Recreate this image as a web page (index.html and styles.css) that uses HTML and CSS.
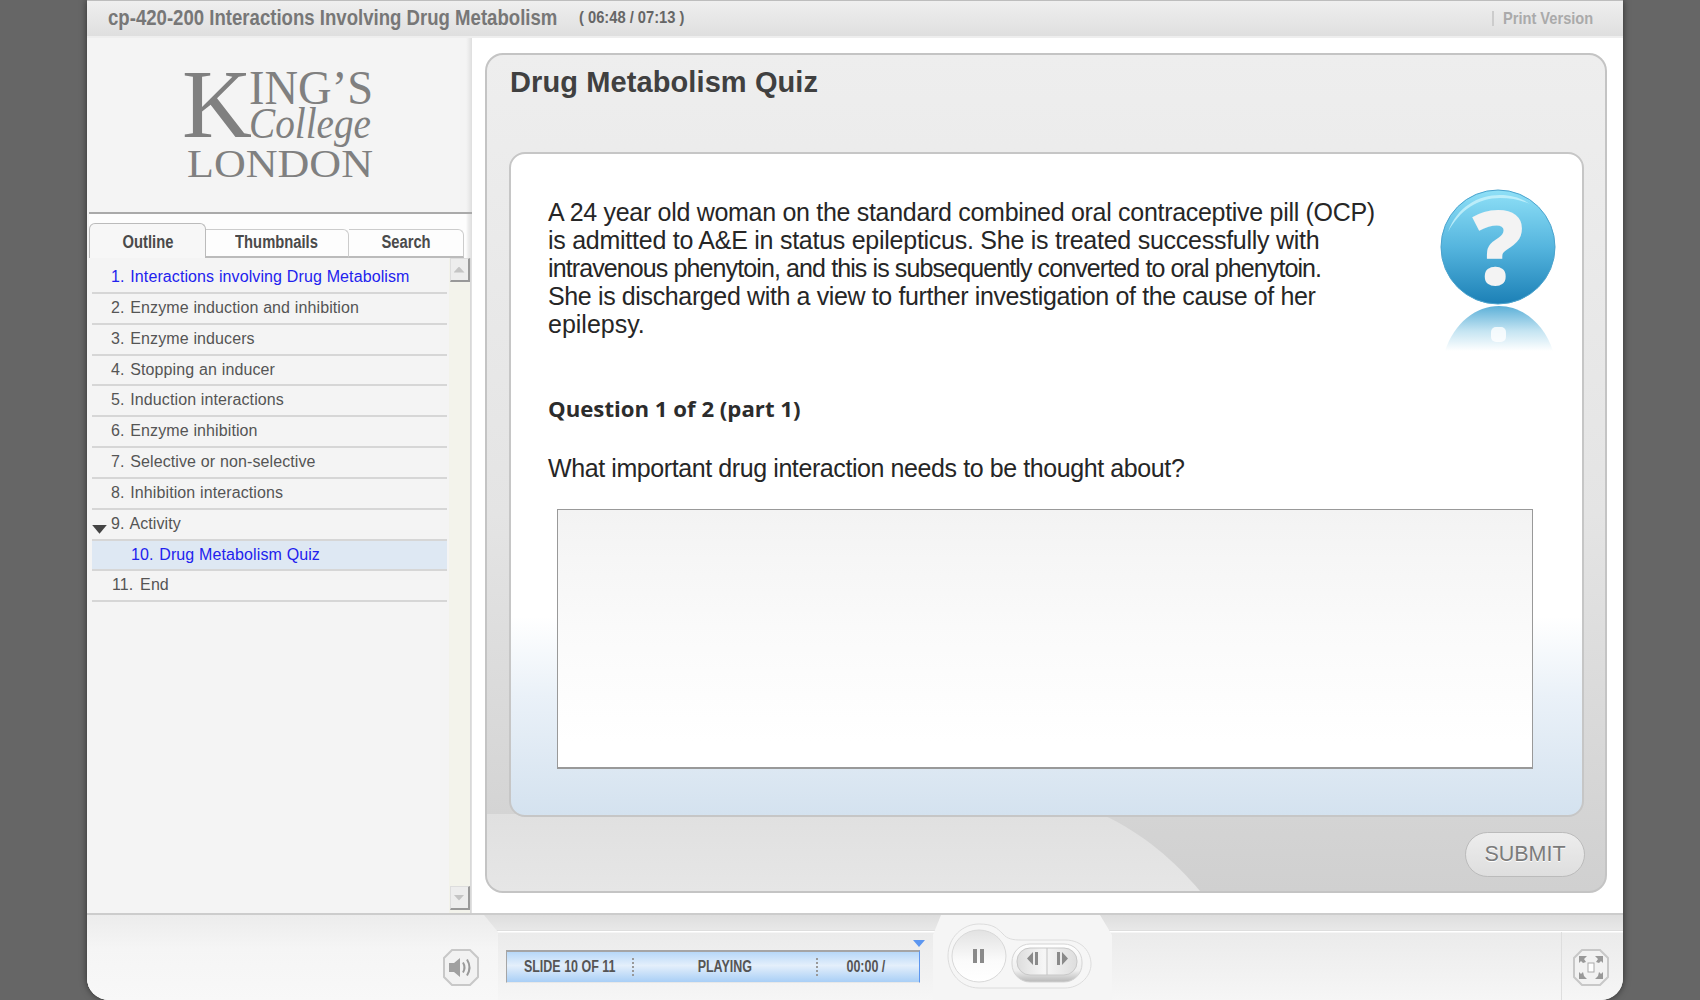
FILE: index.html
```html
<!DOCTYPE html>
<html lang="en">
<head>
<meta charset="utf-8">
<title>Drug Metabolism Quiz</title>
<link rel="stylesheet" href="styles.css">
</head>
<body>
<div class="player">
  <header class="topbar">
    <span class="course"><span class="narrow">cp-420-200 Interactions Involving Drug Metabolism</span></span>
    <span class="time"><span class="narrow">( 06:48 / 07:13 )</span></span>
    <span class="print"><span class="narrow">Print Version</span></span>
  </header>
  <div class="main">
    <aside class="sidebar">
      <div class="logo">
        <svg class="logo-svg" width="200" height="125" viewBox="0 0 200 125">
          <text class="lg-k" x="3" y="71" textLength="70" lengthAdjust="spacingAndGlyphs">K</text>
          <text class="lg-ing" x="70" y="38" textLength="124" lengthAdjust="spacingAndGlyphs">ING’S</text>
          <text class="lg-col" x="70" y="72" textLength="122" lengthAdjust="spacingAndGlyphs">College</text>
          <text class="lg-lon" x="8" y="111" textLength="186" lengthAdjust="spacingAndGlyphs">LONDON</text>
        </svg>
      </div>
      <nav class="tabs">
        <span class="tab tab-active"><span class="narrow">Outline</span></span>
        <span class="tab tab-2"><span class="narrow">Thumbnails</span></span>
        <span class="tab tab-3"><span class="narrow">Search</span></span>
      </nav>
      <div class="listwrap">
        <ol class="outline">
          <li class="row current"><span class="n">1.</span> Interactions involving Drug Metabolism</li>
          <li class="row"><span class="n">2.</span> Enzyme induction and inhibition</li>
          <li class="row"><span class="n">3.</span> Enzyme inducers</li>
          <li class="row"><span class="n">4.</span> Stopping an inducer</li>
          <li class="row"><span class="n">5.</span> Induction interactions</li>
          <li class="row"><span class="n">6.</span> Enzyme inhibition</li>
          <li class="row"><span class="n">7.</span> Selective or non-selective</li>
          <li class="row"><span class="n">8.</span> Inhibition interactions</li>
          <li class="row"><span class="caret"></span><span class="n">9.</span> Activity</li>
          <li class="row sub current selected"><span class="n">10.</span> Drug Metabolism Quiz</li>
          <li class="row last"><span class="n">11.</span> End</li>
        </ol>
        <div class="scrollbar">
          <span class="sbtn"><span class="tri-up"></span></span>
          <span class="sbtn"><span class="tri-down"></span></span>
        </div>
      </div>
    </aside>
    <section class="content">
      <div class="panel">
        <svg class="curve" width="720" height="77" viewBox="0 0 720 77">
          <defs><linearGradient id="cv" x1="0" y1="0" x2="0" y2="1"><stop offset="0" stop-color="#e0e0e0"/><stop offset="1" stop-color="#e6e6e6"/></linearGradient></defs>
          <path d="M0 0H614C658 20 688 48 713 77H0Z"/>
        </svg>
        <h1 class="title">Drug Metabolism Quiz</h1>
        <div class="card">
          <div class="intro">
            <p class="prompt"><span class="ln l1">A 24 year old woman on the standard combined oral contraceptive pill (OCP)</span><span class="ln l2">is admitted to A&amp;E in status epilepticus. She is treated successfully with</span><span class="ln l3">intravenous phenytoin, and this is subsequently converted to oral phenytoin.</span><span class="ln l4">She is discharged with a view to further investigation of the cause of her</span><span class="ln l5">epilepsy.</span></p>
            <svg class="qicon" width="120" height="165" viewBox="0 0 120 165">
              <defs>
                <linearGradient id="qb" x1="0" y1="0" x2="0" y2="1">
                  <stop offset="0" stop-color="#8fe0f7"/>
                  <stop offset=".5" stop-color="#55b5de"/>
                  <stop offset="1" stop-color="#1c80b6"/>
                </linearGradient>
                <linearGradient id="qr" x1="0" y1="0" x2="0" y2="1">
                  <stop offset="0" stop-color="#5cb0d8"/>
                  <stop offset=".55" stop-color="#c4e4f2"/>
                  <stop offset="1" stop-color="#ffffff"/>
                </linearGradient>
              </defs>
              <path class="qref" d="M5 161C14 133 36 116 59 116S104 133 113 161Z"/>
              <rect class="qdot" x="51" y="137" width="15" height="15" rx="5"/>
              <circle class="qcirc" cx="58" cy="57" r="57"/>
              <path class="qhi" d="M8 42C17 17 38 5 60 5C72 5 81 8 90 14C81 10 71 8 60 8C38 8 20 20 8 42Z"/>
              <text class="qmark" x="58" y="95" text-anchor="middle">?</text>
            </svg>
          </div>
          <h2 class="qhead">Question 1 of 2 (part 1)</h2>
          <p class="qtext">What important drug interaction needs to be thought about?</p>
          <div class="answer"></div>
        </div>
        <div class="actions"><span class="submit">SUBMIT</span></div>
      </div>
    </section>
  </div>
  <footer class="footer">
    <div class="foot-left">
      <svg class="oct" width="36" height="37" viewBox="0 0 36 37">
        <path class="oct-bg" d="M9 1H27L35 9V28L27 36H9L1 28V9Z"/>
        <path class="ico-s" d="M6 14H11L17 9V28L11 23H6Z"/>
        <path class="ico-l" d="M20 13.500Q23 18.500 20 23.500M24 10.500Q29 18.500 24 26.500"/>
      </svg>
    </div>
    <div class="foot-status">
      <span class="marker"></span>
      <div class="status">
        <span class="st st-a"><span class="narrow">SLIDE 10 OF 11</span></span>
        <span class="st st-b"><span class="narrow">PLAYING</span></span>
        <span class="st st-c"><span class="narrow">00:00 /</span></span>
      </div>
    </div>
    <div class="controls">
      <svg width="179" height="86" viewBox="0 0 179 86">
        <defs>
          <linearGradient id="pa" x1="0" y1="0" x2="0" y2="1"><stop offset="0" stop-color="#e2e2e2"/><stop offset=".6" stop-color="#fbfbfb"/><stop offset="1" stop-color="#fff"/></linearGradient>
          <linearGradient id="pi" x1="0" y1="0" x2="0" y2="1"><stop offset="0" stop-color="#fff"/><stop offset=".7" stop-color="#eee"/><stop offset="1" stop-color="#b8b8b8"/></linearGradient>
          <linearGradient id="pj" x1="0" y1="0" x2="1" y2="0"><stop offset="0" stop-color="#ddd"/><stop offset=".45" stop-color="#f6f6f6"/><stop offset="1" stop-color="#ddd"/></linearGradient>
        </defs>
        <path class="c-out" d="M46 9C60 9 64 13 70 19C74 24 80 25 88 25H132C150 25 158 38 158 49C158 62 146 73 132 73H46C28 73 15 58 15 41C15 22 30 9 46 9Z"/>
        <ellipse class="c-pause" cx="46" cy="41" rx="27" ry="26"/>
        <rect class="ico" x="40" y="34" width="4" height="14"/>
        <rect class="ico" x="47" y="34" width="4" height="14"/>
        <rect class="c-pill" x="79" y="29" width="70" height="38" rx="18"/>
        <rect class="c-inner" x="84" y="33" width="60" height="27" rx="13"/>
        <path class="c-div" d="M114 33V60"/>
        <path class="ico" d="M94 43.500L100 37V50ZM102 37H105V50H102Z"/>
        <path class="ico" d="M124 37H127V50H124ZM129 37L135 43.500L129 50Z"/>
      </svg>
    </div>
    <div class="foot-right">
      <svg class="oct" width="36" height="37" viewBox="0 0 36 37">
        <path class="oct-bg" d="M9 1H27L35 9V28L27 36H9L1 28V9Z"/>
        <rect class="fs-c" x="15" y="14" width="6" height="9"/>
        <path class="ico2" d="M6 7H14L11 10L13 13L10 14L8 12L6 14ZM30 7H22L25 10L23 13L26 14L28 12L30 14ZM6 30H14L11 27L10 23L8 25L6 23ZM30 30H22L25 27L26 23L28 25L30 23Z"/>
      </svg>
    </div>
  </footer>
</div>
</body>
</html>
```
FILE: styles.css
```css
* { box-sizing: border-box; }
html, body { margin: 0; height: 100%; overflow: hidden; }
body { background: #666; font-family: "Liberation Sans", Arial, sans-serif; }
.player {
  width: 1536px; height: 1000px; margin-left: 87px; background: #fff;
  display: flex; flex-direction: column; overflow: hidden;
  border-radius: 0 0 22px 22px; box-shadow: 0 0 7px rgba(0,0,0,.55);
}
.narrow { display: inline-block; white-space: nowrap; font-weight: 700; }
.topbar {
  height: 38px; flex: none; display: flex; align-items: center; padding: 0 29px 1px 21px;
  border-top: 1px solid #bdbdbd; border-bottom: 2px solid #eee;
  background: linear-gradient(#efefef, #dfdfdf);
}
.course { width: 449px; flex: none; font-size: 22px; color: #777; }
.course .narrow { transform: scaleX(.845); transform-origin: left center; }
.time { margin-left: 22px; width: 108px; flex: none; font-size: 17px; color: #666; }
.time .narrow { transform: scaleX(.865); transform-origin: left center; }
.print { margin-left: auto; width: 102px; flex: none; font-size: 17px; color: #aaa; padding-left: 9px; border-left: 2px solid #ccc; line-height: 15px; }
.print .narrow { transform: scaleX(.86); transform-origin: left center; }
.main { flex: 1; display: flex; min-height: 0; }
.sidebar {
  width: 385px; flex: none; display: flex; flex-direction: column; padding-left: 2px;
  background: linear-gradient(to right, #f4f4f4 calc(100% - 6px), #eeeeee calc(100% - 4px), #dedede);
}
.logo { height: 176px; flex: none; border-bottom: 2px solid #aaa; padding: 28px 0 0 90px; background: linear-gradient(to right, #f4f4f4 calc(100% - 6px), #eeeeee calc(100% - 4px), #dedede); }
.logo-svg { display: block; overflow: visible; }
.logo-svg text { fill: #808080; font-family: "Liberation Serif", serif; }
.lg-k { font-size: 97px; }
.lg-ing { font-size: 48px; }
.lg-col { font-size: 44px; font-style: italic; }
.lg-lon { font-size: 41px; }
.tabs { height: 44px; flex: none; display: flex; align-items: flex-end; background: linear-gradient(to right, #fdfdfd calc(100% - 6px), #eeeeee calc(100% - 4px), #dedede); }
.tab {
  display: flex; align-items: center; justify-content: center; height: 29px; padding-bottom: 2px;
  border: 1px solid #ccc; border-bottom: 2px solid #bbb; border-left: 0; border-radius: 0 6px 0 0;
  font-size: 18px; color: #4a4a4a; background: #fdfdfd;
}
.tab .narrow { transform: scaleX(.82); }
.tab-active { width: 117px; height: 35px; border: 1px solid #bbb; border-bottom: 0; border-radius: 6px 6px 0 0; background: #f7f7f7; padding-top: 3px; padding-bottom: 0; }
.tab-2 { width: 143px; }
.tab-3 { width: 115px; }
.listwrap { flex: 1; display: flex; min-height: 0; }
.outline { list-style: none; margin: 0; padding: 5px 0 0 3px; width: 358px; flex: none; }
.row {
  height: 30.85px; border-bottom: 2px solid #d6d6d6; padding-left: 19px; font-size: 16px; line-height: 28px;
  color: #555; position: relative; white-space: nowrap; word-spacing: .2px; letter-spacing: .1px;
}
.n { margin-right: 1px; }
.current { color: #2222ee; }
.sub { padding-left: 39px; }
.last { padding-left: 20px; }
.last .n { margin-right: 2px; }
.selected { background: #dee8f3; }
.caret { position: absolute; left: 0; top: 15px; width: 15px; height: 9px; background: #444; clip-path: polygon(0 0, 100% 0, 50% 100%); }
.scrollbar {
  width: 22px; flex: none; margin-left: 2px; background: #f3f3eb; display: flex; flex-direction: column;
  border-right: 1px solid #d8d8d8; justify-content: space-between; align-items: center; padding: 0 0 3px;
}
.sbtn { width: 20px; height: 24px; background: #ededed; border: 1px solid #ddd; border-right: 2px solid #999; border-bottom: 2px solid #999; display: flex; align-items: center; justify-content: center; }
.tri-up, .tri-down { width: 11px; height: 6px; background: #c4c4c4; }
.tri-up { clip-path: polygon(50% 0, 100% 100%, 0 100%); }
.tri-down { clip-path: polygon(0 0, 100% 0, 50% 100%); }
.content { flex: 1; padding: 15px 16px 20px 13px; min-width: 0; display: flex; }
.panel {
  flex: 1; position: relative; overflow: hidden; border: 2px solid #c4c4c4; border-radius: 18px;
  background: linear-gradient(#eeeeee, #e4e4e4 55%, #d0d0d0);
  padding: 0 21px 0 22px; display: flex; flex-direction: column;
}
.curve { position: absolute; left: 0; bottom: 0; }
.curve path { fill: url(#cv); }
.title { margin: 12px 0 0 1px; font-size: 29px; letter-spacing: .1px; line-height: 30px; height: 85px; font-weight: 700; color: #404040; position: relative; }
.card {
  height: 665px; flex: none; position: relative; border: 2px solid #c6c6c6; border-radius: 16px; padding: 36px 26px 0 37px;
  background: linear-gradient(#fff 0, #fff 70%, #eaf1f8 82%, #d4e2ef 100%);
}
.intro { display: flex; justify-content: space-between; align-items: flex-start; height: 165px; }
.prompt { margin: 8px 0 0; font-size: 25px; line-height: 28px; color: #262626; white-space: nowrap; }
.ln { display: block; }
.l1 { letter-spacing: -.3px; }
.l2 { letter-spacing: -.26px; }
.l3 { letter-spacing: -.89px; }
.l4 { letter-spacing: -.37px; }
.qicon { flex: none; margin-right: -4px; overflow: visible; }
.qcirc { fill: url(#qb); stroke: #4ba3cd; stroke-width: 1; }
.qref { fill: url(#qr); }
.qdot { fill: #fff; opacity: .8; }
.qhi { fill: #c9f2fb; opacity: .8; }
.qmark { font-family: "Open Sans", sans-serif; font-weight: 800; font-size: 102px; fill: #f3f3f3; }
.qhead { margin: 39px 0 0; font-family: "Open Sans", sans-serif; font-weight: 700; font-size: 22.200px; line-height: 30px; color: #2c2c2c; }
.qtext { margin: 30px 0 0; font-size: 25px; line-height: 28px; color: #262626; letter-spacing: -.41px; }
.answer { width: 976px; height: 260px; margin: 27px 0 0 9px; border: 1px solid #999; border-bottom-width: 2px; background: linear-gradient(#f3f3f3, #fafafa 45%, #fff 90%); }
.actions { display: flex; justify-content: flex-end; padding-top: 15px; position: relative; margin-right: -1px; }
.submit {
  width: 120px; height: 45px; border: 1px solid #bbb; border-radius: 23px; display: flex; align-items: center; justify-content: center;
  font-size: 21.500px; color: #7b7b7b; background: linear-gradient(#ededed, #dedede); text-shadow: 0 1px 0 #fff;
}
.footer {
  height: 87px; flex: none; display: flex; border-top: 2px solid #ccc;
  background: linear-gradient(#dedede 0, #e8e8e8 15px, #bdbdbd 15px, #fff 16px, #fff 17px, #ebebeb 18px, #f6f6f6 100%);
}
.foot-left {
  width: 411px; flex: none; display: flex; justify-content: flex-end; align-items: flex-start; padding: 34px 19px 0 0;
  background: linear-gradient(#ececec, #f5f5f5 40%, #f8f8f8); clip-path: polygon(0 0, 397px 0, 100% 17px, 100% 100%, 0 100%);
}
.oct { display: block; }
.oct-bg { fill: #f2f2f2; stroke: #c8c8c8; stroke-width: 2; }
.ico { fill: #8a8a8a; }
.ico-s { fill: #a0a0a0; }
.ico2 { fill: #999; }
.ico-l { fill: none; stroke: #9a9a9a; stroke-width: 2; }
.fs-c { fill: #fff; stroke: #aaa; }
.foot-status { width: 435px; flex: none; padding: 35px 0 0 8px; position: relative; }
.marker { position: absolute; left: 415px; top: 25px; width: 12px; height: 7px; background: #5c96f0; clip-path: polygon(0 0, 100% 0, 50% 100%); }
.status {
  width: 414px; height: 33px; display: flex; align-items: center; border: 1px solid #a5a5a5; border-top-width: 2px; border-right: 1px solid #5c96f0; border-bottom: 1px solid #e8e8e8;
  background: linear-gradient(#b7d8f8, #e4effb 45%, #a9cff6);
  font-size: 16px; color: #555;
}
.status .narrow { transform: scaleX(.78); }
.st { display: flex; align-items: center; justify-content: center; height: 18px; }
.st-a { width: 127px; border-right: 2px dotted #999; }
.st-b { width: 184px; border-right: 2px dotted #999; }
.st-c { width: 96px; }
.controls { width: 179px; flex: none; background: #f5f5f5; clip-path: polygon(8px 0, calc(100% - 12px) 0, 100% 20px, 100% 100%, 0 100%, 0 20px); }
.controls svg { display: block; }
.c-out { fill: #f6f6f6; stroke: #dcdcdc; }
.c-pause { fill: url(#pa); stroke: #d8d8d8; }
.c-pill { fill: url(#pi); stroke: #d4d4d4; }
.c-inner { fill: url(#pj); stroke: #c8c8c8; }
.c-div { stroke: #c4c4c4; }
.foot-right { flex: 1; display: flex; justify-content: flex-end; align-items: flex-start; padding: 34px 14px 0 0; position: relative; }
.foot-right::before { content: ""; position: absolute; right: 61px; top: 17px; bottom: 0; width: 1px; background: #dedede; }
```
